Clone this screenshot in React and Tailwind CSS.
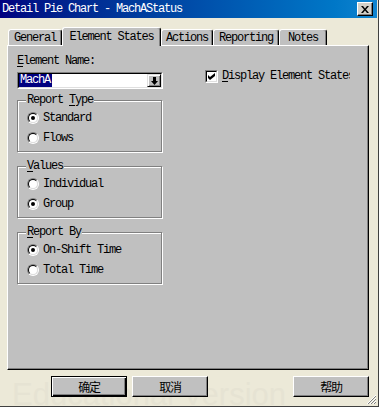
import React from "react";

const mono = "font-['Liberation_Mono',monospace] text-[12px] tracking-[-1.2px] text-black";

function Key({ children }) {
  return <span className="underline underline-offset-[2px]">{children}</span>;
}

function Tab({ label, width, selected }) {
  const base =
    "flex items-center justify-center rounded-t-[3px] border-l border-t border-r border-l-white border-t-white border-r-black bg-[#c0c0c0] shadow-[inset_-1px_0_0_#808080]";
  return (
    <div
      className={
        selected
          ? `${base} ${width} relative z-10 -mb-px h-[19px]`
          : `${base} ${width} h-[16px]`
      }
    >
      {label}
    </div>
  );
}

function Radio({ checked, label }) {
  return (
    <div className="flex h-[20px] items-center gap-[4px] pl-[9px]">
      <span className="flex h-[12px] w-[12px] items-center justify-center rounded-full border border-t-[#808080] border-l-[#808080] border-r-white border-b-white">
        <span className="flex h-[10px] w-[10px] items-center justify-center rounded-full border border-t-black border-l-black border-r-[#dfdfdf] border-b-[#dfdfdf] bg-white">
          {checked ? <span className="h-[4px] w-[4px] rounded-full bg-black" /> : null}
        </span>
      </span>
      <span className="leading-[13px]">{label}</span>
    </div>
  );
}

function GroupBox({ legend, children, mt }) {
  return (
    <div
      className={`relative h-[52px] w-[145px] border border-[#808080] pt-[7px] shadow-[inset_1px_1px_0_#fff,1px_1px_0_#fff] ${mt}`}
    >
      <span className="absolute -top-[7px] left-[8px] bg-[#c0c0c0] px-[1px] leading-[13px]">
        {legend}
      </span>
      {children}
    </div>
  );
}

function Button({ label, isDefault, extra }) {
  return (
    <button
      type="button"
      className={
        isDefault
          ? `flex h-[21px] w-[76px] items-center justify-center border border-black bg-[#c0c0c0] shadow-[inset_1px_1px_0_#fff,inset_-1px_-1px_0_#000,inset_-2px_-2px_0_#808080] ${extra}`
          : `flex h-[21px] w-[76px] items-center justify-center border border-t-white border-l-white border-r-black border-b-black bg-[#c0c0c0] shadow-[inset_-1px_-1px_0_#808080] ${extra}`
      }
    >
      <span className="font-['Noto_Sans_CJK_SC',sans-serif] text-[12px] leading-none text-black">
        {label}
      </span>
    </button>
  );
}

export default function App() {
  return (
    <div className={`relative h-[407px] w-[379px] overflow-hidden bg-[#ece9d8] shadow-[inset_-1px_-1px_0_#404040] ${mono}`}>
      <div className="pointer-events-none absolute left-[12px] top-[379px] whitespace-nowrap font-['Liberation_Sans',sans-serif] text-[31px] leading-[31px] tracking-normal text-[#e6e3d3]">
        Educational Version
      </div>

      <div className="flex h-[18px] w-[377px] items-center justify-between bg-gradient-to-r from-[#000080] to-[#1084d0] pl-[2px] pr-[4px]">
        <span className="text-white leading-[13px]">Detail Pie Chart - MachAStatus</span>
        <div className="flex h-[14px] w-[16px] items-center justify-center border border-t-white border-l-white border-r-black border-b-black bg-[#d4d0c8] shadow-[inset_-1px_-1px_0_#808080]">
          <svg width="8" height="7" viewBox="0 0 8 7">
            <path d="M0 0h2l2 2.5L6 0h2L5 3.5 8 7H6L4 4.5 2 7H0l3-3.5z" fill="#000" />
          </svg>
        </div>
      </div>

      <div className="ml-[8px] mt-[9px] flex h-[18px] items-end">
        <Tab label="General" width="w-[54px]" />
        <Tab label="Element States" width="w-[99px]" selected />
        <Tab label="Actions" width="w-[52px]" />
        <Tab label="Reporting" width="w-[66px]" />
        <Tab label="Notes" width="w-[48px]" />
      </div>

      <div className="ml-[7px] flex h-[325px] w-[362px] border-b border-l border-r border-t border-b-black border-l-white border-r-black border-t-white bg-[#c0c0c0] shadow-[inset_-1px_-1px_0_#808080]">
        <div className="ml-[9px] mt-[9px] flex flex-col">
          <div className="h-[13px] leading-[13px]">
            <Key>E</Key>lement Name:
          </div>
          <div className="mt-[4px] flex h-[17px] w-[146px] border border-b-white border-l-[#808080] border-r-white border-t-[#808080]">
            <div className="flex flex-1 items-center border border-b-[#dfdfdf] border-l-black border-r-[#dfdfdf] border-t-black bg-white">
              <span className="bg-[#000080] pl-[1px] pr-[2px] leading-[13px] text-white">MachA</span>
              <span className="ml-auto flex h-[13px] w-[14px] items-center justify-center border border-b-black border-l-[#dfdfdf] border-r-black border-t-[#dfdfdf] bg-[#c0c0c0] shadow-[inset_1px_1px_0_#fff,inset_-1px_-1px_0_#808080]">
                <svg width="7" height="8" viewBox="0 0 7 8">
                  <path d="M2 0h3v4h2L3.5 8 0 4h2z" fill="#000" />
                </svg>
              </span>
            </div>
          </div>

          <GroupBox mt="mt-[11px]" legend={<>Report <Key>T</Key>ype</>}>
            <Radio checked label="Standard" />
            <Radio label="Flows" />
          </GroupBox>

          <GroupBox mt="mt-[14px]" legend={<><Key>V</Key>alues</>}>
            <Radio label="Individual" />
            <Radio checked label="Group" />
          </GroupBox>

          <GroupBox mt="mt-[14px]" legend={<><Key>R</Key>eport By</>}>
            <Radio checked label="On-Shift Time" />
            <Radio label="Total Time" />
          </GroupBox>
        </div>

        <div className="ml-[42px] mt-[24px] flex h-[13px] items-center gap-[4px]">
          <span className="flex h-[13px] w-[13px] border border-b-white border-l-[#808080] border-r-white border-t-[#808080]">
            <span className="flex flex-1 items-center justify-center border border-b-[#dfdfdf] border-l-black border-r-[#dfdfdf] border-t-black bg-white">
              <svg width="7" height="7" viewBox="0 0 7 7">
                <path d="M0 2l2 2 5-4v3L2 7 0 5z" fill="#000" />
              </svg>
            </span>
          </span>
          <span className="w-[128px] overflow-hidden whitespace-nowrap leading-[13px]">
            <Key>D</Key>isplay Element States
          </span>
        </div>
      </div>

      <div className="relative ml-[7px] mt-[6px] flex w-[362px]">
        <Button label="确定" isDefault extra="ml-[44px]" />
        <Button label="取消" extra="ml-[5px]" />
        <Button label="帮助" extra="ml-auto" />
      </div>

      <svg className="absolute bottom-[2px] right-[2px]" width="11" height="11" viewBox="0 0 11 11">
        <path d="M10 1L1 10M10 4L4 10M10 7L7 10" stroke="#fff" strokeWidth="1" />
        <path d="M10 2L2 10M10 5L5 10M10 8L8 10" stroke="#808080" strokeWidth="1" />
      </svg>
    </div>
  );
}
